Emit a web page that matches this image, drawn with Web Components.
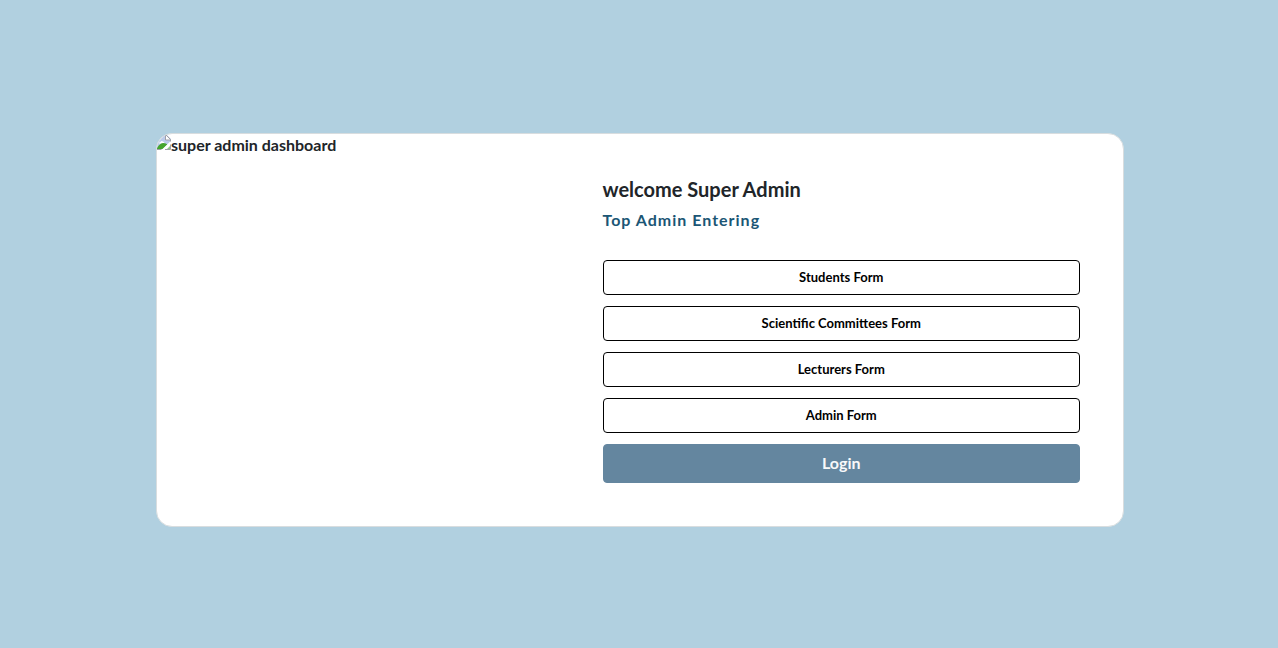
<!DOCTYPE html>
<html lang="en">
<head>
<meta charset="utf-8">
<meta name="viewport" content="width=device-width, initial-scale=1">
<title>Super Admin</title>
<style>
  body { margin: 0; background: #b1d0e0; color: #212529; font: 700 16px/24px Lato, "Open Sans", sans-serif; }
</style>
</head>
<body>
<admin-page>
  <admin-card>
    <missing-picture slot="media" label="super admin dashboard"></missing-picture>
    <admin-heading>
      <span slot="title">welcome Super Admin</span>
      <span slot="subtitle">Top Admin Entering</span>
    </admin-heading>
    <form-button>Students Form</form-button>
    <form-button>Scientific Committees Form</form-button>
    <form-button>Lecturers Form</form-button>
    <form-button>Admin Form</form-button>
    <form-button kind="primary">Login</form-button>
  </admin-card>
</admin-page>
<script>
  const define = (name, markup, setup) => customElements.define(name, class extends HTMLElement {
    constructor() {
      super();
      const template = document.createElement('template');
      template.innerHTML = markup;
      this.attachShadow({ mode: 'open' }).append(template.content.cloneNode(true));
    }
    connectedCallback() { if (setup) setup(this); }
  });

  define('admin-page', `
    <style>
      :host { display: block; }
      main { box-sizing: border-box; min-height: 100vh; display: flex; align-items: center; justify-content: center; padding: 24px 12px 12px 14px; }
    </style>
    <main><slot></slot></main>`);

  define('admin-card', `
    <style>
      :host { display: block; width: 100%; max-width: 968px; }
      section { display: grid; grid-template-columns: 5fr 7fr; overflow: hidden; background: #fff; border: 1px solid #d8dddf; border-radius: 16px; }
      .body { display: flex; flex-direction: column; gap: 11px; padding: 43px; }
      .media, .body { min-width: 0; }
      @media (max-width: 700px) { section { grid-template-columns: 1fr; } }
    </style>
    <section>
      <div class="media"><slot name="media"></slot></div>
      <div class="body"><slot></slot></div>
    </section>`);

  define('missing-picture', `
    <style>
      :host { display: block; line-height: 22px; }
      div { display: flex; align-items: flex-start; }
      svg { flex: none; display: block; }
    </style>
    <div>
      <svg width="14" height="16" viewBox="0 0 14 16" aria-hidden="true">
        <path d="M0 0h9l5 5v2L6 15H0z" fill="#bccbea"/>
        <path d="M2 9.500q0-1.500 1.500-1.500 1-1.500 2.500-.5 1.500.5 1.500 2z" fill="#fff"/>
        <path d="M0 14q3-5 6.500-5 2.500 0 4 1.500L6 15H0z" fill="#45a52e"/>
        <path d="M10 15l4-4v4z" fill="#8fc583"/>
        <path d="M5 15.500l9-8.500v3l-5.500 5.500z" fill="#fff"/>
        <path d="M8.500 1v5h5" fill="#fff" stroke="#a0a0a6"/>
        <path d="M0 .5h8.500l5 5v2M0 15.500h4.500M8 15.500h5.500v-5" fill="none" stroke="#a0a0a6"/>
      </svg>
      <span></span>
    </div>`, host => { host.shadowRoot.querySelector('span').textContent = host.getAttribute('label'); });

  define('admin-heading', `
    <style>
      :host { display: block; margin-bottom: 18px; }
      h1, h2 { margin: 0; font-weight: 700; }
      h1 { font-size: 20px; line-height: 24px; margin-bottom: 8px; }
      h2 { font-size: 16px; line-height: 22px; letter-spacing: 1px; color: #1b5675; }
    </style>
    <h1><slot name="title"></slot></h1>
    <h2><slot name="subtitle"></slot></h2>`);

  define('form-button', `
    <style>
      :host { display: block; }
      button { box-sizing: border-box; display: block; width: 100%; height: 35px; padding: 0 12px 2px; border: 1px solid #000; border-radius: 4px; background: #fff; color: #000; font: inherit; font-size: 13px; line-height: 20px; cursor: pointer; }
      :host([kind="primary"]) button { height: 39px; border-color: #64869f; background: #64869f; color: #f8f9fa; font-size: 16px; }
    </style>
    <button type="button"><slot></slot></button>`);
</script>
</body>
</html>
